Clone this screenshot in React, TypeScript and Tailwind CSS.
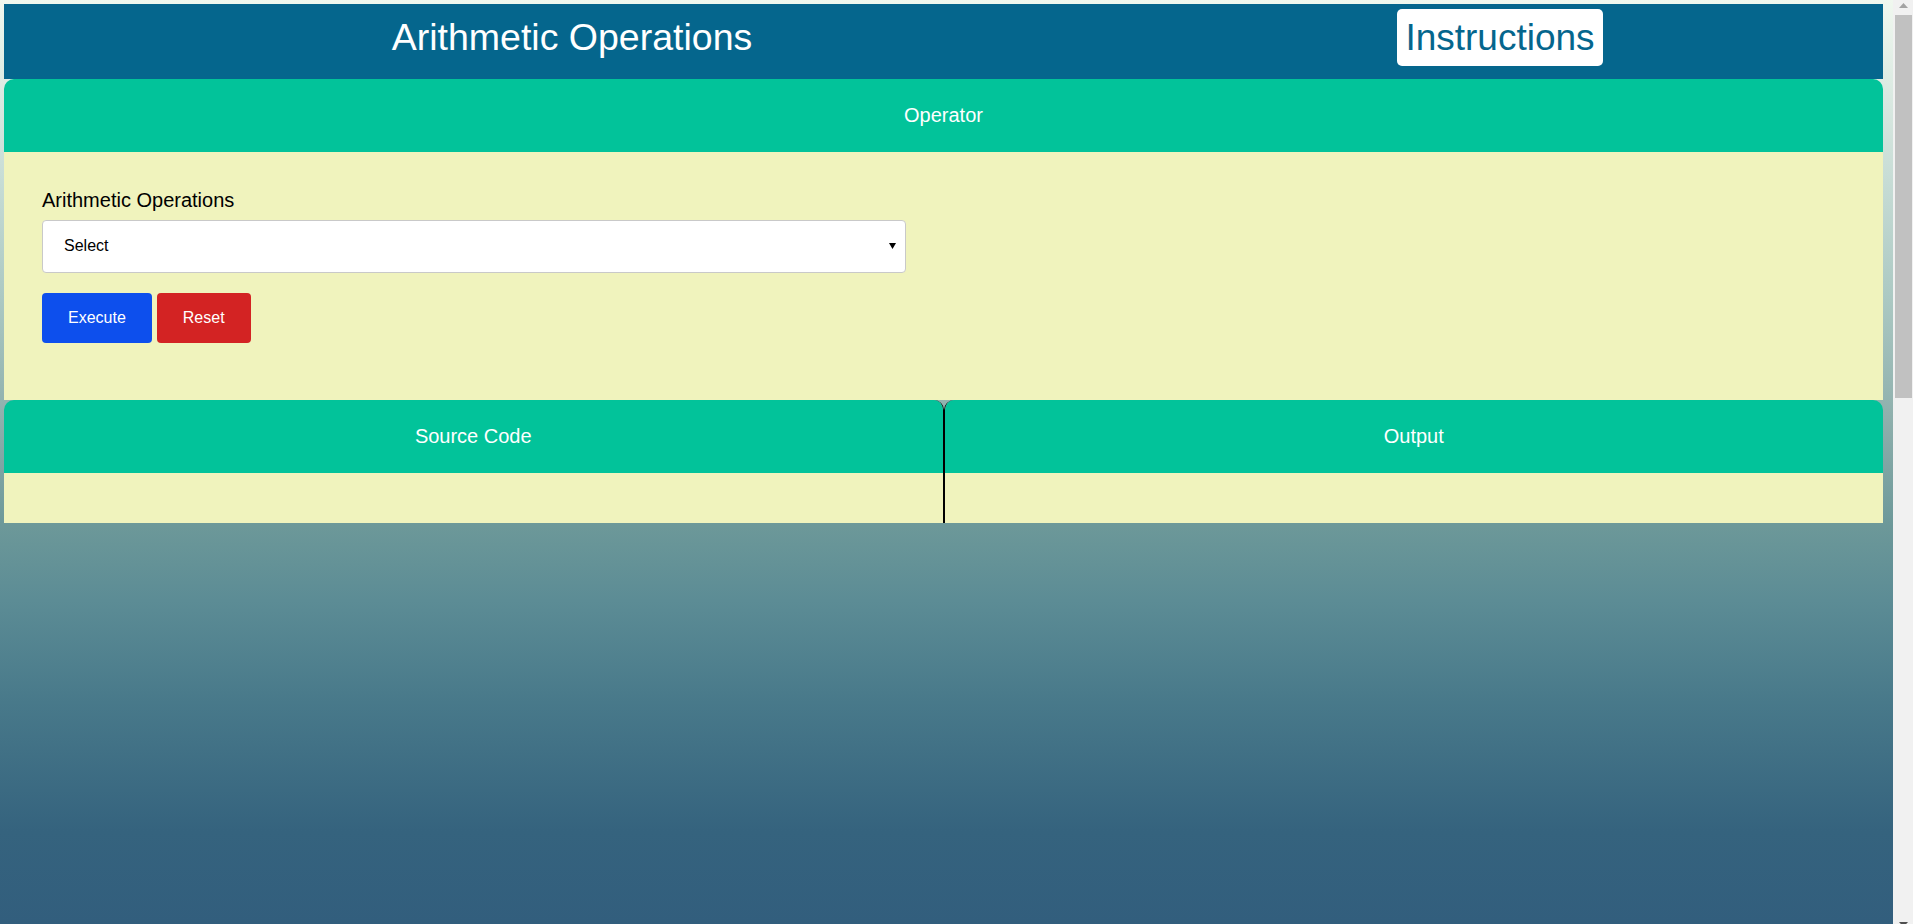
import React from 'react';

const FONT = "font-['Liberation_Sans',Arial,sans-serif]";

const Panel: React.FC<{ title: string; className?: string; children?: React.ReactNode }> = ({
  title,
  className = '',
  children,
}) => (
  <div className={`rounded-t-[10px] overflow-hidden ${className}`}>
    <div className="h-[73px] pb-[2px] bg-[#02c39a] flex items-center justify-center text-white text-[20px]">
      {title}
    </div>
    {children}
  </div>
);

// window scrollbar as it shows in the screenshot
const ScrollBar: React.FC = () => (
  <div className="w-[20px] h-full flex flex-col bg-[#f1f1f1]">
    <div className="h-[15px] flex justify-center pt-[3px]">
      <svg width="9" height="5" viewBox="0 0 9 5">
        <polygon points="4.5,0 9,5 0,5" fill="#a3a3a3" />
      </svg>
    </div>
    <div className="h-[383px] pl-[2px] pr-[1px]">
      <div className="h-full bg-[#c1c1c1]" />
    </div>
    <div className="flex-1" />
    <div className="h-[15px] overflow-hidden flex justify-center pt-[13px]">
      <svg width="9" height="5" viewBox="0 0 9 5" className="shrink-0">
        <polygon points="0,0 9,0 4.5,5" fill="#505050" />
      </svg>
    </div>
  </div>
);

const App: React.FC = () => {
  return (
    <div className={`${FONT} flex h-screen w-full overflow-hidden`}>
      <div className="flex-1 h-full pt-[4px] pl-[4px] pr-[10px] bg-[linear-gradient(to_bottom,#f0f8ef_0%,#c8ddd6_19%,#acc9c3_32%,#8fb0ad_45%,#6c9899_57%,#5c8c95_65%,#48798a_76%,#35637e_90%,#325e7d_100%)]">
        {/* top bar */}
        <header className="flex items-baseline h-[75px] pt-[5px] bg-[#05668d]">
          <h1 className="w-[1136px] text-center text-[37.5px] text-white">Arithmetic Operations</h1>
          <div className="w-[720px] text-center">
            <button className="bg-white rounded-[5px] px-2 py-2 text-[37px] leading-[41px] text-[#05668d]">
              Instructions
            </button>
          </div>
        </header>

        <Panel title="Operator">
          <div className="bg-[#f0f3bd] h-[248px] pt-[37px] pl-[38px]">
            <label className="block text-[20px] leading-[23px] text-black mb-[8px]">
              Arithmetic Operations
            </label>
            <div className="w-[864px] h-[53px] pb-[1px] bg-white border border-[#c9c9c9] rounded-[4px] flex items-center justify-between pl-[21px] pr-[9px] text-[16px] text-black">
              <span>Select</span>
              <svg width="7" height="6" viewBox="0 0 7 6">
                <polygon points="0,0 7,0 3.5,6" fill="#000" />
              </svg>
            </div>
            <div className="flex gap-[5px] mt-[20px]">
              <button className="h-[50px] pb-[1px] px-[26px] rounded-[4px] bg-[#0d4fed] text-white text-[16px]">
                Execute
              </button>
              <button className="h-[50px] pb-[1px] px-[26px] rounded-[4px] bg-[#d32323] text-white text-[16px]">
                Reset
              </button>
            </div>
          </div>
        </Panel>

        <div className="flex">
          <Panel title="Source Code" className="w-1/2 border-r border-black">
            <div className="bg-[#f0f3bd] h-[50px]" />
          </Panel>
          <Panel title="Output" className="w-1/2 border-l border-black">
            <div className="bg-[#f0f3bd] h-[50px]" />
          </Panel>
        </div>
      </div>
      <ScrollBar />
    </div>
  );
};

export default App;
